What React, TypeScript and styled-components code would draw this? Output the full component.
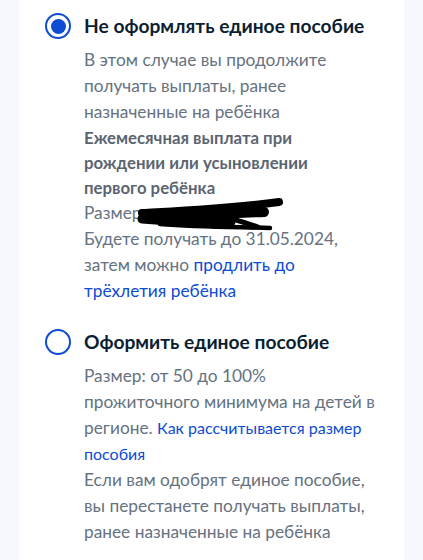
import React from 'react';
import styled, { createGlobalStyle } from 'styled-components';

const GlobalStyle = createGlobalStyle`
  html, body {
    margin: 0;
    padding: 0;
    background: #f5f8fd;
  }
  body {
    font-family: Lato, 'Noto Sans', sans-serif;
    -webkit-font-smoothing: antialiased;
  }
`;

const Page = styled.div`
  min-height: 560px;
  padding: 0 19px;
  box-sizing: border-box;
`;

const Card = styled.div`
  background: #ffffff;
  min-height: 560px;
  padding: 13px 23px 20px 26px;
  box-sizing: border-box;
  display: flex;
  flex-direction: column;
  gap: 25px;
`;

const Option = styled.div`
  display: grid;
  grid-template-columns: 26px 1fr;
  column-gap: 13px;
`;

const Radio = styled.span<{ checked?: boolean }>`
  width: 26px;
  height: 26px;
  box-sizing: border-box;
  border-radius: 50%;
  border: 2.5px solid #0d4cd3;
  display: flex;
  align-items: center;
  justify-content: center;

  &::after {
    content: '';
    display: ${p => (p.checked ? 'block' : 'none')};
    width: 15px;
    height: 15px;
    border-radius: 50%;
    background: #0d4cd3;
  }
`;

const Title = styled.div`
  font-size: 19.2px;
  font-weight: 700;
  line-height: 26px;
  color: #0b1f33;
`;

const Body = styled.div`
  grid-column: 2;
  margin-top: 8px;
  font-size: 17.3px;
  line-height: 26px;
  color: #66727f;
`;

const Strong = styled.div`
  max-width: 262px;
  font-size: 16.8px;
  font-weight: 700;
  line-height: 25px;
  color: #5b6572;
`;

const Link = styled.a<{ small?: boolean }>`
  color: #0d4cd3;
  text-decoration: none;
  font-size: ${p => (p.small ? '16px' : 'inherit')};
`;

const Redacted = styled.div`
  position: relative;
`;

// black marker scribble hiding the amount
const Scribble = styled.svg`
  position: absolute;
  left: 54px;
  top: -1px;
  width: 146px;
  height: 32px;
  overflow: visible;
`;

export default function App() {
  return (
    <>
      <GlobalStyle />
      <Page>
        <Card>
          <Option>
            <Radio checked />
            <Title>Не оформлять единое пособие</Title>
            <Body>
              В этом случае вы продолжите получать выплаты, ранее назначенные на ребёнка
              <Strong>Ежемесячная выплата при рождении или усыновлении первого ребёнка</Strong>
              <Redacted>
                Размер
                <Scribble viewBox="0 0 146 32">
                  <g stroke="#000" strokeLinecap="round" strokeLinejoin="round" fill="none">
                    <path d="M4 14 C 40 12, 90 10, 141 3" strokeWidth="8" />
                    <path d="M10 17 C 50 16, 100 14, 126 13" strokeWidth="10" />
                    <path d="M4 20 C 30 22, 60 24, 93 23" strokeWidth="9" />
                    <path d="M22 25 C 60 28, 100 28, 132 29" strokeWidth="4.5" />
                    <path d="M83 17 C 96 20, 108 24, 120 28" strokeWidth="5" />
                  </g>
                </Scribble>
              </Redacted>
              Будете получать до 31.05.2024, затем можно{' '}
              <Link href="#">продлить до трёхлетия ребёнка</Link>
            </Body>
          </Option>
          <Option>
            <Radio />
            <Title>Оформить единое пособие</Title>
            <Body>
              Размер: от 50 до 100% прожиточного минимума на детей в регионе.{' '}
              <Link href="#" small>Как рассчитывается размер пособия</Link>
              <div>Если вам одобрят единое пособие, вы перестанете получать выплаты, ранее назначенные на ребёнка</div>
            </Body>
          </Option>
        </Card>
      </Page>
    </>
  );
}
